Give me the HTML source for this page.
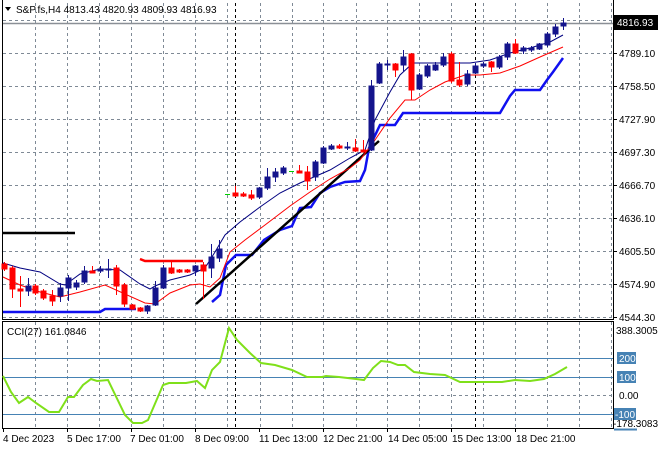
<!DOCTYPE html><html><head><meta charset="utf-8"><style>
html,body{margin:0;padding:0;background:#fff;width:660px;height:450px;overflow:hidden}
svg{display:block;font-family:"Liberation Sans",sans-serif;font-size:10px}
</style></head><body>
<svg width="660" height="450" viewBox="0 0 660 450" xmlns="http://www.w3.org/2000/svg">
<rect width="660" height="450" fill="#fff"/>
<g stroke="#7f8a96" stroke-width="1" stroke-dasharray="3,3" fill="none">
<path d="M3 20.5H613M3 53.5H613M3 86.5H613M3 119.5H613M3 152.5H613M3 185.5H613M3 218.5H613M3 251.5H613M3 284.5H613M3 317.5H613"/>
<path d="M35.5 3V319M67.5 3V319M99.5 3V319M131.5 3V319M163.5 3V319M195.5 3V319M227.5 3V319M260.5 3V319M292.5 3V319M323.5 3V319M356.5 3V319M387.5 3V319M419.5 3V319M451.5 3V319M483.5 3V319M515.5 3V319M547.5 3V319M579.5 3V319M611.5 3V319"/>
<path d="M35.5 322V428M67.5 322V428M99.5 322V428M131.5 322V428M163.5 322V428M195.5 322V428M227.5 322V428M260.5 322V428M292.5 322V428M323.5 322V428M356.5 322V428M387.5 322V428M419.5 322V428M451.5 322V428M483.5 322V428M515.5 322V428M547.5 322V428M579.5 322V428M611.5 322V428"/>
<path d="M3 395.5H613"/>
</g>
<g stroke="#000" stroke-dasharray="3,3"><path d="M235.5 3V319M235.5 322V428M475.5 3V319M475.5 322V428"/></g>
<path d="M3 23.5H613" stroke="#8a8f96" stroke-width="1.5"/>
<g stroke="#4682b4"><path d="M3 358.5H613M3 377.5H613M3 414.5H613"/></g>
<!-- frames -->
<g stroke="#000" fill="none"><path d="M2.5 0V319.5H613.5V0M2.5 321.5H613.5V428.5H2.5Z"/></g>
<!-- indicators main -->
<path d="M3 233H75" stroke="#000" stroke-width="2.5"/>
<path d="M140 259L145 261H203" stroke="#f00" stroke-width="2.5" fill="none"/>
<path d="M3 312H100L105 309H136" stroke="#1010f0" stroke-width="2.5" fill="none"/>
<path d="M212 302L220 295L226 265L236 255L252 255L264 240L280 230L292 226L300 208L311 207L320 193L330 187L345 182L360 181L365 170L369 148L380 125L395 125L403 113L500 113L510 96L515 90L540 90L547 80L553 72L563 58" stroke="#1010f0" stroke-width="2.5" fill="none"/>
<path d="M196 304L379 141" stroke="#000" stroke-width="2.5"/>
<path d="M3 263L20 268L40 272L60 284L65 285L80 274L100 269L120 270L140 284L150 289L155 286L170 280L190 275L205 268L215 252L225 235L240 222L260 207L280 193L300 183L330 170L350 158L365 150L375 120L390 92L400 75L413 63L470 63L490 60L510 53L530 48L550 42L563 35" stroke="#000080" stroke-width="1" fill="none"/>
<path d="M3 277L20 285L40 292L60 297L80 292L105 285L125 294L145 303L155 304L170 293L190 285L200 284L210 287L220 278L230 252L245 240L265 225L290 206L310 192L330 179L350 168L360 160L375 140L390 118L405 100L415 100L430 90L445 82L465 75L480 75L500 73L520 66L540 57L563 47" stroke="#f00" stroke-width="1" fill="none"/>
<!-- candles -->
<g stroke-width="1">
<g stroke="#f00" fill="#f00">
<path d="M4.5 262V271M12.5 266V298M20.5 276V307M35.5 284V295M43.5 289V300M52.5 290V306M92.5 266V273M116.5 265V295M124.5 283V307M132.5 304V310M140.5 307V312M171.5 262V274M179.5 269V273M187.5 269V273M203.5 262V299M235.5 186V197M243.5 192V197M251.5 190V200M299.5 165V173M307.5 166V190M339.5 144V149M355.5 139V152M363.5 140V152M395.5 63V77M411.5 53V100M451.5 52V83M459.5 62V87M491.5 61V72M515.5 39V54"/>
<rect x="2" y="264" width="5" height="5"/><rect x="10" y="268" width="5" height="21"/><rect x="18" y="289" width="5" height="2"/><rect x="33" y="286" width="5" height="7"/><rect x="41" y="291" width="5" height="7"/><rect x="50" y="296" width="5" height="5"/><rect x="90" y="271" width="5" height="2"/><rect x="114" y="268" width="5" height="18"/><rect x="122" y="285" width="5" height="19"/><rect x="130" y="305" width="5" height="4"/><rect x="138" y="308" width="5" height="3"/><rect x="169" y="268" width="5" height="5"/><rect x="177" y="270" width="5" height="2"/><rect x="185" y="270" width="5" height="2"/><rect x="201" y="265" width="5" height="6"/><rect x="233" y="193" width="5" height="3"/><rect x="241" y="194" width="5" height="2"/><rect x="249" y="195" width="5" height="3"/><rect x="297" y="171" width="5" height="2"/><rect x="305" y="172" width="5" height="9"/><rect x="337" y="146" width="5" height="2"/><rect x="353" y="148" width="5" height="3"/><rect x="361" y="150" width="5" height="2"/><rect x="393" y="64" width="5" height="6"/><rect x="409" y="54" width="5" height="36"/><rect x="449" y="54" width="5" height="27"/><rect x="457" y="80" width="5" height="5"/><rect x="489" y="62" width="5" height="5"/><rect x="513" y="44" width="5" height="9"/>
</g>
<g stroke="#14148c" fill="#14148c">
<path d="M28.5 278V296M60.5 283V302M68.5 275V301M76.5 280V290M84.5 266V284M100.5 266V273M108.5 259V278M147.5 305V314M155.5 281V306M163.5 265V289M195.5 265V276M211.5 244V278M219.5 240V262M259.5 187V199M267.5 168V190M275.5 168V182M283.5 166V175M315.5 160V181M323.5 146V164M331.5 144V150M347.5 142V150M371.5 80V151M379.5 62V84M387.5 60V70M403.5 50V72M419.5 73V90M427.5 64V78M435.5 62V71M443.5 53V67M467.5 70V86M475.5 63V74M483.5 62V68M499.5 55V69M507.5 42V60M523.5 46V54M531.5 46V52M539.5 43V50M547.5 32V47M555.5 24V37M563.5 18V30"/>
<rect x="26" y="286" width="5" height="5"/><rect x="58" y="288" width="5" height="8"/><rect x="66" y="278" width="5" height="10"/><rect x="74" y="283" width="5" height="4"/><rect x="82" y="271" width="5" height="11"/><rect x="98" y="269" width="5" height="2"/><rect x="106" y="269" width="5" height="1"/><rect x="145" y="306" width="5" height="5"/><rect x="153" y="288" width="5" height="17"/><rect x="161" y="268" width="5" height="20"/><rect x="193" y="266" width="5" height="5"/><rect x="209" y="257" width="5" height="11"/><rect x="217" y="249" width="5" height="9"/><rect x="257" y="188" width="5" height="9"/><rect x="265" y="177" width="5" height="11"/><rect x="273" y="172" width="5" height="5"/><rect x="281" y="168" width="5" height="5"/><rect x="313" y="162" width="5" height="15"/><rect x="321" y="148" width="5" height="15"/><rect x="329" y="146" width="5" height="3"/><rect x="345" y="147" width="5" height="1"/><rect x="369" y="86" width="5" height="64"/><rect x="377" y="64" width="5" height="19"/><rect x="385" y="64" width="5" height="1"/><rect x="401" y="57" width="5" height="8"/><rect x="417" y="75" width="5" height="14"/><rect x="425" y="66" width="5" height="10"/><rect x="433" y="65" width="5" height="5"/><rect x="441" y="57" width="5" height="8"/><rect x="465" y="74" width="5" height="10"/><rect x="473" y="66" width="5" height="7"/><rect x="481" y="64" width="5" height="2"/><rect x="497" y="57" width="5" height="10"/><rect x="505" y="44" width="5" height="13"/><rect x="521" y="48" width="5" height="3"/><rect x="529" y="48" width="5" height="2"/><rect x="537" y="44" width="5" height="5"/><rect x="545" y="34" width="5" height="11"/><rect x="553" y="27" width="5" height="7"/><rect x="561" y="23" width="5" height="3"/>
</g>
<path d="M225 194.5H230M289 171.5H294" stroke="#00d000"/>
</g>
<!-- CCI -->
<path d="M3 376L11 392L19 403L28 397L36 403L49 412L59 412L68 397L74 397L83 385L91 379L97 381L108 380L125 415L133 423L142 423L148 420L163 385L169 383L186 383L197 381L205 388L212 370L220 362L229 328L237 340L250 353L261 363L275 365L292 370L307 377L322 377L326 376L339 377L356 379L364 380L373 368L381 361L390 362L398 365L405 365L414 372L430 374L445 375L460 382L466 382L483 382L502 382L515 380L530 381L544 379L555 374L567 367" stroke="#7fe01a" stroke-width="2" fill="none"/>
<!-- header -->
<path d="M5 7H11L8 11Z" fill="#000"/>
<text x="16" y="13" fill="#000">S&amp;P.fs,H4  4813.43 4820.93 4809.93 4816.93</text>
<text x="7" y="335" fill="#000">CCI(27) 161.0846</text>
<!-- right axis -->
<g fill="#000">
<path d="M613 53.5h4M613 86.5h4M613 119.5h4M613 152.5h4M613 185.5h4M613 218.5h4M613 251.5h4M613 284.5h4M613 317.5h4" stroke="#000"/>
<text x="619" y="57">4789.10</text><text x="619" y="90">4758.50</text><text x="619" y="123">4727.90</text><text x="619" y="156">4697.30</text><text x="619" y="189">4666.70</text><text x="619" y="222">4636.10</text><text x="619" y="255">4605.50</text><text x="619" y="288">4574.90</text><text x="619" y="321">4544.30</text>
<text x="616" y="334">388.3005</text><text x="619" y="399">0.00</text><text x="613" y="427">-178.3083</text>
</g>
<rect x="614" y="15" width="44" height="15" fill="#000"/>
<text x="617" y="26" fill="#fff">4816.93</text>
<rect x="617" y="352" width="19" height="12" fill="#4682b4"/><text x="619" y="362" fill="#fff">200</text>
<rect x="617" y="371" width="19" height="12" fill="#4682b4"/><text x="619" y="381" fill="#fff">100</text>
<rect x="614" y="408" width="22" height="12" fill="#4682b4"/><text x="615" y="418" fill="#fff">-100</text>
<path d="M614 429.5h23" stroke="#4682b4" stroke-width="2"/>
<!-- time axis -->
<path d="M3.5 428V432M67.5 428V432M131.5 428V432M195.5 428V432M259.5 428V432M323.5 428V432M387.5 428V432M451.5 428V432M515.5 428V432" stroke="#000"/>
<g fill="#000">
<text x="3" y="442">4 Dec 2023</text><text x="67" y="442">5 Dec 17:00</text><text x="130" y="442">7 Dec 01:00</text><text x="195" y="442">8 Dec 09:00</text><text x="259" y="442">11 Dec 13:00</text><text x="323" y="442">12 Dec 21:00</text><text x="388" y="442">14 Dec 05:00</text><text x="452" y="442">15 Dec 13:00</text><text x="516" y="442">18 Dec 21:00</text>
</g>
</svg>
</body></html>
